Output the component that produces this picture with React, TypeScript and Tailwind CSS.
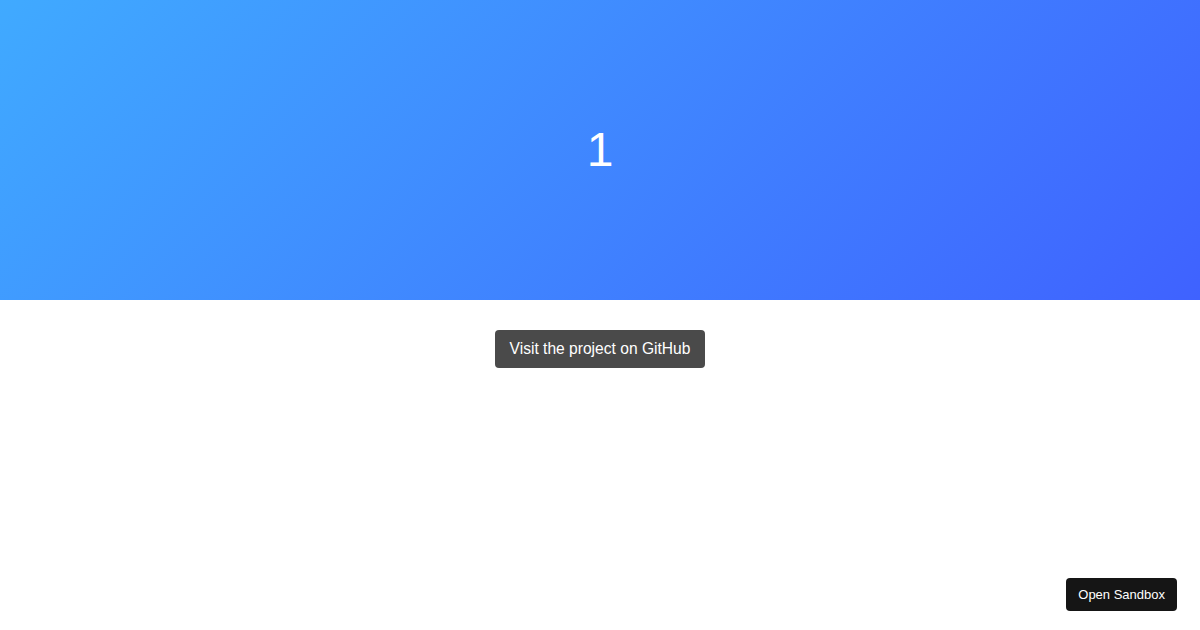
export default function App() {
  return (
    <div className="relative h-[630px] w-full bg-white font-['Liberation_Sans',Arial,sans-serif]">
      <div className="flex h-[300px] items-center justify-center bg-[linear-gradient(135deg,#40aaff,#3f62ff)]">
        <span className="text-[48px] leading-none font-normal text-white">1</span>
      </div>
      <div className="flex justify-center pt-[30px]">
        <a className="flex h-[38px] items-center rounded-[4px] bg-[#4a4a4a] px-[15px] text-[15.6px] text-white">
          Visit the project on GitHub
        </a>
      </div>
      <a className="absolute right-[23px] bottom-[19px] flex h-[33px] items-center rounded-[4px] bg-[#151515] px-[12px] text-[13px] text-white">
        Open Sandbox
      </a>
    </div>
  );
}
